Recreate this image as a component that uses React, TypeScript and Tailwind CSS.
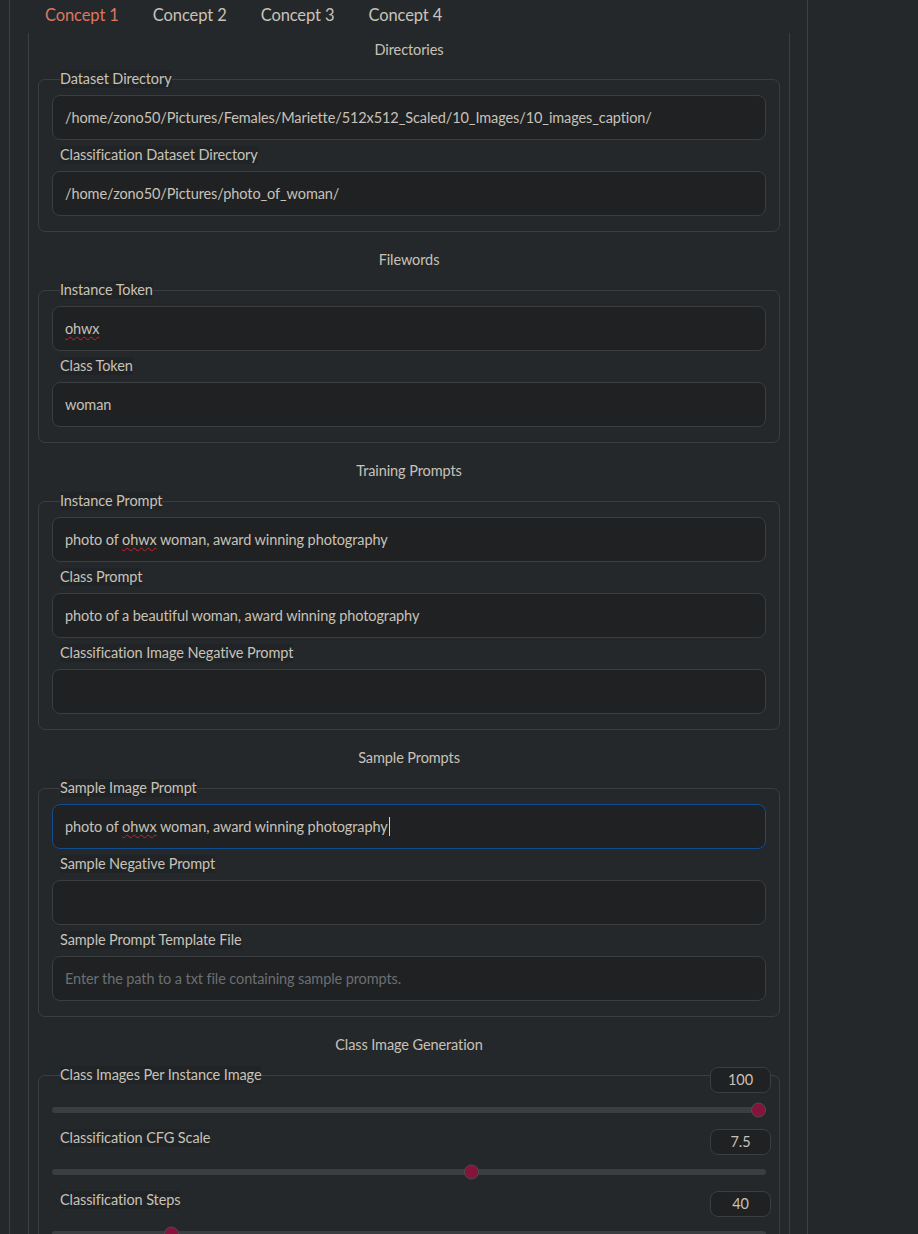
import type { ReactNode } from 'react';

const TABS = ['Concept 1', 'Concept 2', 'Concept 3', 'Concept 4'];

function Label({ children }: { children: ReactNode }) {
  return (
    <div className="ml-2 h-[18px] w-fit bg-[#212426] leading-[18px]">{children}</div>
  );
}

function Group({ legend, children }: { legend: string; children: ReactNode }) {
  return (
    <fieldset className="rounded-[7px] border border-[#3a3e41] px-[13px] pb-[15px]">
      <legend className="ml-2 h-[18px] bg-[#212426] leading-[18px]">{legend}</legend>
      {children}
    </fieldset>
  );
}

// the "ohwx" token gets flagged by the browser spell checker
function Misspelled({ children }: { children: ReactNode }) {
  return (
    <span className="underline decoration-wavy decoration-[#d01f2a] decoration-1 underline-offset-[2px]">
      {children}
    </span>
  );
}

function TextBox({
  children,
  placeholder,
  focused,
}: {
  children?: ReactNode;
  placeholder?: string;
  focused?: boolean;
}) {
  return (
    <div
      className={
        focused
          ? 'flex h-[45px] items-center rounded-[8px] border border-[#104d90] bg-[#1f2123] px-3'
          : 'flex h-[45px] items-center rounded-[8px] border border-[#3a3e41] bg-[#1f2123] px-3'
      }
    >
      {children ? (
        <span className="whitespace-nowrap">{children}</span>
      ) : (
        <span className="whitespace-nowrap text-[#6c6f72]">{placeholder}</span>
      )}
      {focused && <span className="ml-px h-[19px] w-px bg-[#d8d4cc]" />}
    </div>
  );
}

function Field({ label, children }: { label: string; children: ReactNode }) {
  return (
    <>
      <div className="mt-[6px] mb-[7px]">
        <Label>{label}</Label>
      </div>
      {children}
    </>
  );
}

function Heading({ children, first }: { children: string; first?: boolean }) {
  return (
    <div
      className={
        first
          ? 'mb-[11px] h-[18px] text-center leading-[18px]'
          : 'mt-[19px] mb-[12px] h-[18px] text-center leading-[18px]'
      }
    >
      {children}
    </div>
  );
}

function NumBox({ value }: { value: string }) {
  return (
    <div className="flex h-[26px] w-[61px] items-center justify-center rounded-[8px] border border-[#3a3e41] bg-[#1f2123]">
      {value}
    </div>
  );
}

function Track({ pct }: { pct: number }) {
  return (
    <div className="relative mt-[14px] h-[6px] rounded-full bg-[#3a3e41]">
      <div
        className="absolute top-1/2 h-[15px] w-[15px] -translate-y-1/2 rounded-full border border-[#4a4e51] bg-[#85133a]"
        style={{ left: `calc((100% - 15px) * ${pct / 100})` }}
      />
    </div>
  );
}

function SliderRow({ label, value, pct }: { label: string; value: string; pct: number }) {
  return (
    <div className="mt-[16px]">
      <div className="-mr-[5px] flex items-start justify-between">
        <Label>{label}</Label>
        <NumBox value={value} />
      </div>
      <Track pct={pct} />
    </div>
  );
}

export default function App() {
  return (
    <div className="min-h-screen bg-[#25282a] font-['Lato','Noto_Sans',sans-serif] text-[14.5px] tracking-[-0.1px] text-[#c8c2b8]">
      <div className="ml-[9px] min-h-[1234px] w-[799px] border-x border-[#3c4043] pl-[18px] pr-[17px]">
        {/* Tabs */}
        <div className="flex h-[33px] items-center pb-[3px]">
          {TABS.map((tab, i) => (
            <button
              key={tab}
              className={
                i === 0
                  ? 'px-[17px] text-[16.5px] text-[#dc7760]'
                  : 'px-[17px] text-[16.5px] text-[#c8c2b8]'
              }
            >
              {tab}
            </button>
          ))}
        </div>

        <div className="border-x border-[#3c4043] px-[9px] pt-[8px]">
          <Heading first>Directories</Heading>
          <Group legend="Dataset Directory">
            <div className="pt-[7px]" />
            <TextBox>/home/zono50/Pictures/Females/Mariette/512x512_Scaled/10_Images/10_images_caption/</TextBox>
            <Field label="Classification Dataset Directory">
              <TextBox>/home/zono50/Pictures/photo_of_woman/</TextBox>
            </Field>
          </Group>

          <Heading>Filewords</Heading>
          <Group legend="Instance Token">
            <div className="pt-[7px]" />
            <TextBox>
              <Misspelled>ohwx</Misspelled>
            </TextBox>
            <Field label="Class Token">
              <TextBox>woman</TextBox>
            </Field>
          </Group>

          <Heading>Training Prompts</Heading>
          <Group legend="Instance Prompt">
            <div className="pt-[7px]" />
            <TextBox>
              photo of <Misspelled>ohwx</Misspelled> woman, award winning photography
            </TextBox>
            <Field label="Class Prompt">
              <TextBox>photo of a beautiful woman, award winning photography</TextBox>
            </Field>
            <Field label="Classification Image Negative Prompt">
              <TextBox placeholder="" />
            </Field>
          </Group>

          <Heading>Sample Prompts</Heading>
          <Group legend="Sample Image Prompt">
            <div className="pt-[7px]" />
            <TextBox focused>
              photo of <Misspelled>ohwx</Misspelled> woman, award winning photography
            </TextBox>
            <Field label="Sample Negative Prompt">
              <TextBox placeholder="" />
            </Field>
            <Field label="Sample Prompt Template File">
              <TextBox placeholder="Enter the path to a txt file containing sample prompts." />
            </Field>
          </Group>

          <Heading>Class Image Generation</Heading>
          <Group legend="Class Images Per Instance Image">
            <div className="-mr-[5px] -mt-[17px] flex justify-end">
              <NumBox value="100" />
            </div>
            <Track pct={100} />
            <SliderRow label="Classification CFG Scale" value="7.5" pct={59} />
            <SliderRow label="Classification Steps" value="40" pct={16} />
          </Group>
        </div>
      </div>
    </div>
  );
}
